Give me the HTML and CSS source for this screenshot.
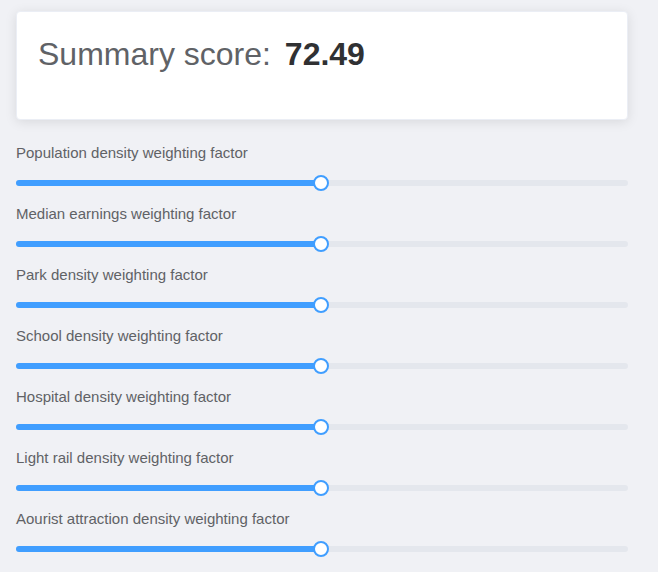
FILE: index.html
```html
<!DOCTYPE html>
<html lang="en">
<head>
<meta charset="utf-8">
<title>Summary score</title>
<link rel="stylesheet" href="styles.css">
</head>
<body>
<div class="page">
  <div class="card">
    <div class="score">
      <span class="score-label">Summary score:</span>
      <span class="score-value">72.49</span>
    </div>
  </div>
  <div class="factors">
    <div class="factor">
      <div class="factor-label">Population density weighting factor</div>
      <div class="slider"><div class="runway"><div class="bar" style="width:50%"></div><div class="thumb" style="left:50%"></div></div></div>
    </div>
    <div class="factor">
      <div class="factor-label">Median earnings weighting factor</div>
      <div class="slider"><div class="runway"><div class="bar" style="width:50%"></div><div class="thumb" style="left:50%"></div></div></div>
    </div>
    <div class="factor">
      <div class="factor-label">Park density weighting factor</div>
      <div class="slider"><div class="runway"><div class="bar" style="width:50%"></div><div class="thumb" style="left:50%"></div></div></div>
    </div>
    <div class="factor">
      <div class="factor-label">School density weighting factor</div>
      <div class="slider"><div class="runway"><div class="bar" style="width:50%"></div><div class="thumb" style="left:50%"></div></div></div>
    </div>
    <div class="factor">
      <div class="factor-label">Hospital density weighting factor</div>
      <div class="slider"><div class="runway"><div class="bar" style="width:50%"></div><div class="thumb" style="left:50%"></div></div></div>
    </div>
    <div class="factor">
      <div class="factor-label">Light rail density weighting factor</div>
      <div class="slider"><div class="runway"><div class="bar" style="width:50%"></div><div class="thumb" style="left:50%"></div></div></div>
    </div>
    <div class="factor">
      <div class="factor-label">Aourist attraction density weighting factor</div>
      <div class="slider"><div class="runway"><div class="bar" style="width:50%"></div><div class="thumb" style="left:50%"></div></div></div>
    </div>
  </div>
</div>
</body>
</html>
```

FILE: styles.css
```css
html, body {
  margin: 0;
  padding: 0;
  background: #f0f1f5;
  font-family: "Liberation Sans", Arial, sans-serif;
}

.page {
  width: 612px;
  padding: 11px 30px 0 16px;
}

.card {
  background: #ffffff;
  border: 1px solid #ebeef5;
  border-radius: 4px;
  box-shadow: 0 2px 12px 0 rgba(0, 0, 0, 0.1);
  padding: 20px 20px 20px 21px;
  height: 67px;
}

.score {
  padding-top: 4px;
  font-size: 32px;
  line-height: 37px;
}

.score-label {
  color: #606266;
}

.score-value {
  color: #303133;
  font-weight: bold;
  margin-left: 5px;
}

.factors {
  margin-top: 21px;
}

.factor-label {
  font-size: 15px;
  line-height: 23px;
  height: 23px;
  color: #606266;
}

.slider {
  padding: 16px 0;
}

.runway {
  position: relative;
  height: 6px;
  border-radius: 3px;
  background: #e4e7ed;
}

.bar {
  height: 6px;
  border-radius: 3px;
  background: #409eff;
}

.thumb {
  position: absolute;
  top: 50%;
  width: 16px;
  height: 16px;
  box-sizing: border-box;
  border: 2px solid #409eff;
  border-radius: 50%;
  background: #ffffff;
  transform: translate(-9px, -50%);
}
```
